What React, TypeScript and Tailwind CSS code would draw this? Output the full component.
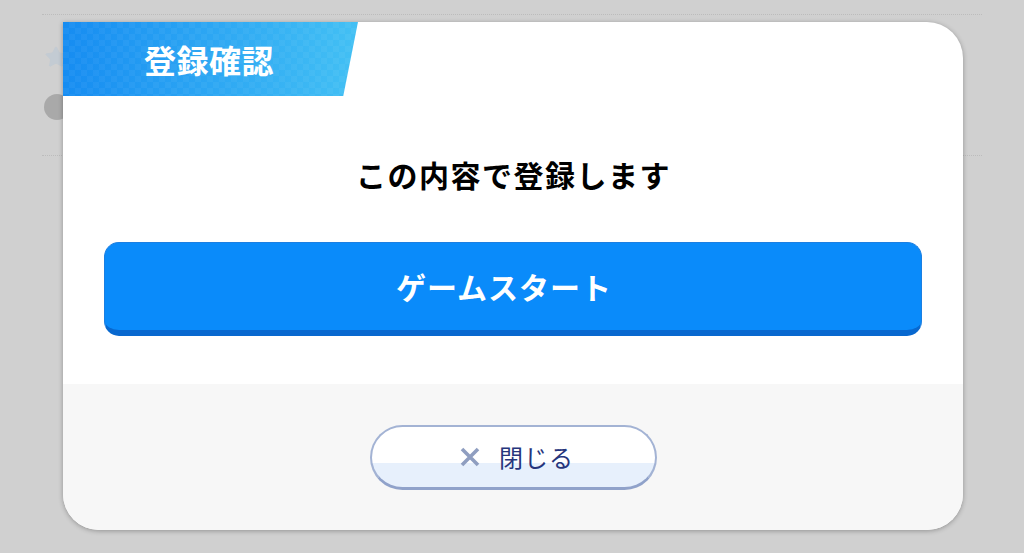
import { Star } from "lucide-react";

const jp = "font-['Noto_Sans_CJK_JP','Noto_Sans',sans-serif]";

function Backdrop() {
  return (
    <div className="px-[42px]">
      <div className="h-[15px] border-b border-dotted border-[#bcbcbc]" />
      <div className="h-[141px] border-b border-dotted border-[#bcbcbc] flex flex-col pt-[30px] pl-[2px] gap-[25px]">
        <Star size={24} className="text-[#c3cbd3]" fill="#c3cbd3" strokeWidth={1} />
        <div className="w-[26px] h-[26px] rounded-full bg-[#a9a9a9]" />
      </div>
    </div>
  );
}

function CloseIcon() {
  return (
    <svg width="20" height="20" viewBox="0 0 20 20" className="shrink-0">
      <path d="M2 2 L18 18 M18 2 L2 18" stroke="#8f9ec0" strokeWidth="3.6" strokeLinecap="butt" />
    </svg>
  );
}

export default function App() {
  return (
    <div className={`relative w-[1024px] h-[553px] overflow-hidden bg-[#d0d0d0] ${jp}`}>
      <Backdrop />

      {/* modal */}
      <div className="absolute left-[63px] top-[22px] w-[900px] h-[508px] flex flex-col bg-white rounded-tr-[36px] rounded-b-[36px] overflow-hidden shadow-[0_1px_5px_rgba(0,0,0,0.3)]">
        <div className="h-[74px] shrink-0">
          <div className="relative w-[295px] h-[74px] bg-gradient-to-r from-[#168cf1] to-[#43c0f4] [clip-path:polygon(0_0,100%_0,95%_100%,0_100%)] flex items-center">
            <div className="absolute inset-0 opacity-[0.04] bg-[repeating-conic-gradient(#ffffff_0_25%,transparent_0_50%)] bg-[length:12px_12px]" />
            <span className="relative pl-[81px] text-[32px] leading-none font-bold text-white tracking-[0.5px]">登録確認</span>
          </div>
        </div>

        <div className="flex-1 flex flex-col items-center px-[41px]">
          <p className="mt-[60px] pl-[1px] text-[30px] leading-[36px] font-bold text-black tracking-[1.5px]">この内容で登録します</p>
          <button className="mt-[50px] w-full h-[94px] rounded-[15px] bg-[#0a8bfa] border border-[#1b7fe2] border-b-[6px] border-b-[#0868cf] flex items-center justify-center pr-[18px] pb-[2px]">
            <span className="text-[30px] leading-none font-bold text-white tracking-[1px]">ゲームスタート</span>
          </button>
        </div>

        <div className="h-[146px] shrink-0 bg-[#f7f7f7] flex items-center justify-center">
          <button className="w-[287px] h-[65px] rounded-full border-2 border-[#a3b3d4] border-b-[3px] border-b-[#90a2ca] bg-[linear-gradient(to_bottom,#ffffff_0,#ffffff_60%,#e7f0fc_60%,#e7f0fc_100%)] flex items-center justify-center gap-[19px] pl-[8px]">
            <CloseIcon />
            <span className="text-[24px] leading-none text-[#26357c] tracking-[1px]">閉じる</span>
          </button>
        </div>
      </div>
    </div>
  );
}
